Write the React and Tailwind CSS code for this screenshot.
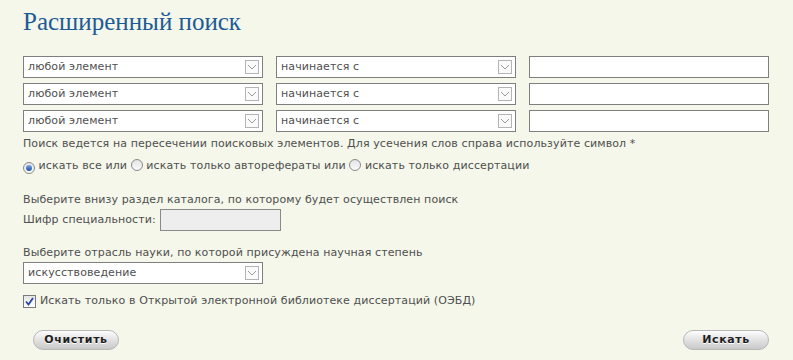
import React from "react";

const ink = "text-[#4f4f4f]";

function Arrow() {
  return (
    <span className="absolute right-[3px] top-[3px] flex h-[14px] w-[14px] items-center justify-center border border-[#b4b4b4] bg-[#fafafa]">
      <svg width="10" height="6" viewBox="0 0 10 6">
        <path d="M1 1 L5 5 L9 1" fill="none" stroke="#9a9a9a" strokeWidth="1" />
      </svg>
    </span>
  );
}

function Select({ value, className = "" }) {
  return (
    <div className={`relative h-[22px] border border-[#7f7f7f] bg-white pl-[4px] leading-[20px] ${className}`}>
      {value}
      <Arrow />
    </div>
  );
}

function Radio({ checked }) {
  return (
    <span className="inline-flex h-[12px] w-[12px] items-center justify-center rounded-full border border-[#8a8a8a] bg-gradient-to-b from-[#e4e4e4] to-[#fafafa] align-[-2px]">
      {checked && <span className="h-[6px] w-[6px] rounded-full bg-gradient-to-b from-[#7aa8e6] to-[#1a4fa0]" />}
    </span>
  );
}

function PillButton({ children }) {
  return (
    <button className="h-[20px] w-[86px] rounded-full border border-[#b8b8b8] bg-gradient-to-b from-[#fdfdfd] via-[#e2e2e2] to-[#c9c9c9] text-[11px] font-bold tracking-[0.6px] text-[#1f1f1f] [text-shadow:0_1px_0_#fff]">
      {children}
    </button>
  );
}

export default function App() {
  const rows = [0, 1, 2];
  return (
    <div className={`min-h-screen bg-[#f4f7ea] px-[23px] pt-[7px] font-['DejaVu_Sans',sans-serif] text-[11px] tracking-[0.1px] ${ink}`}>
      <h1 className="font-['Liberation_Serif',serif] text-[25px] leading-[30px] tracking-normal text-[#1d5b97]">
        Расширенный поиск
      </h1>

      {/* search rows */}
      <div className="mt-[19px] flex flex-col gap-[5px]">
        {rows.map((r) => (
          <div key={r} className="flex gap-[13px]">
            <Select value="любой элемент" className="w-[240px]" />
            <Select value="начинается с" className="w-[240px]" />
            <div className="h-[22px] w-[240px] border border-[#7f7f7f] bg-white" />
          </div>
        ))}
      </div>

      <p className="mt-[1px] leading-[22px]">
        Поиск ведется на пересечении поисковых элементов. Для усечения слов справа используйте символ *
      </p>
      <div className="leading-[22px]">
        <Radio checked /> искать все или <Radio /> искать только авторефераты или <Radio /> искать только диссертации
      </div>

      <p className="mt-[14px] leading-[18px]">
        Выберите внизу раздел каталога, по которому будет осуществлен поиск
      </p>
      <div className="flex items-center gap-[4px]">
        <span>Шифр специальности:</span>
        <div className="h-[22px] w-[121px] border border-[#8a8a8a] bg-[#eeeeee]" />
      </div>

      <p className="mt-[13px] leading-[18px]">
        Выберите отрасль науки, по которой присуждена научная степень
      </p>
      <Select value="искусствоведение" className="w-[240px]" />

      <div className="mt-[8px] flex items-center gap-[4px] leading-[18px]">
        <span className="flex h-[13px] w-[13px] items-center justify-center border border-[#7a7a7a] bg-gradient-to-b from-[#e6e6e6] to-white">
          <svg width="9" height="9" viewBox="0 0 9 9">
            <path d="M1 4.5 L3.5 7.5 L8 1" fill="none" stroke="#2548a8" strokeWidth="1.8" />
          </svg>
        </span>
        <span>Искать только в Открытой электронной библиотеке диссертаций (ОЭБД)</span>
      </div>

      <div className="mt-[20px] flex justify-between pl-[10px] pr-[1px]">
        <PillButton>Очистить</PillButton>
        <PillButton>Искать</PillButton>
      </div>
    </div>
  );
}
